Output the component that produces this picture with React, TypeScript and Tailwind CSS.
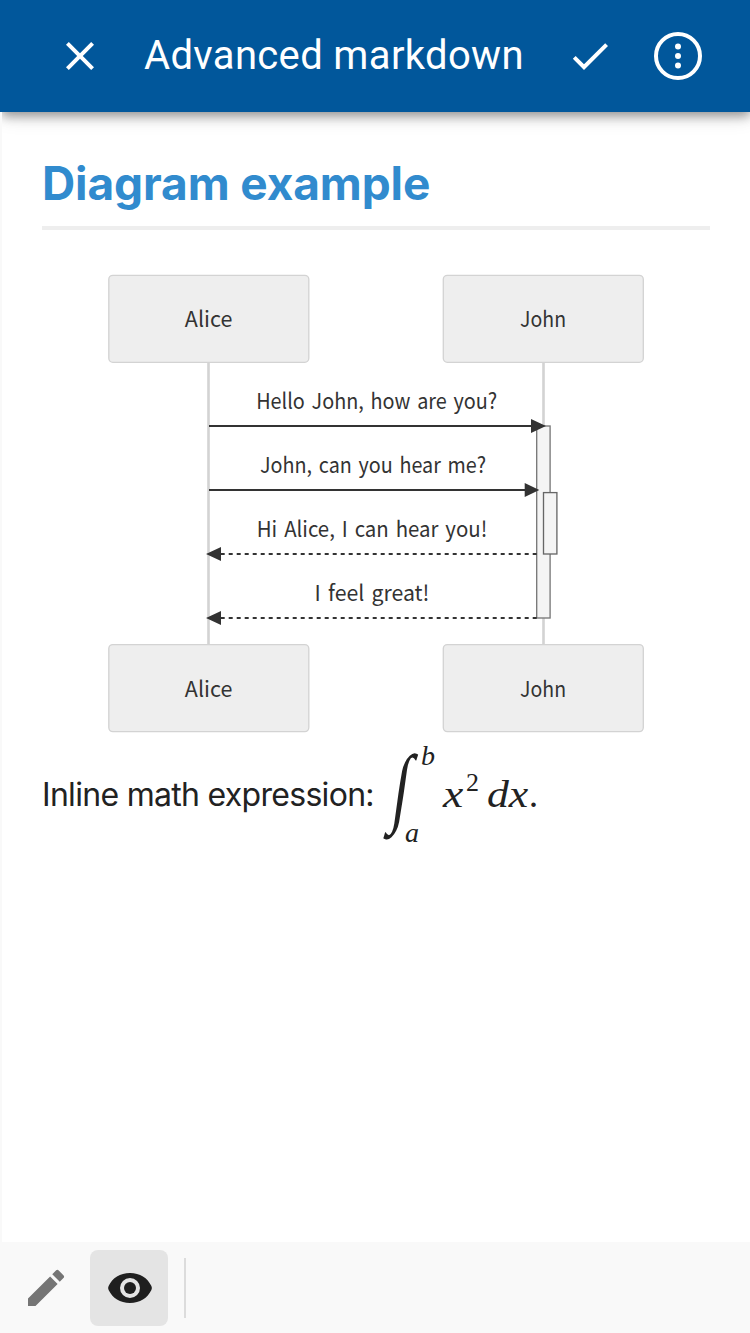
import { MdCheck, MdClose, MdEdit } from "react-icons/md";

const INK = "#333333";
const LINE = "#d3d3d3";

function Actor({ x, y, name, length }: { x: number; y: number; name: string; length: number }) {
  return (
    <g>
      <rect x={x} y={y} width="200" height="87" rx="4" fill="#eeeeee" stroke={LINE} strokeWidth="1.33" />
      <Label x={x + 99.8} y={y + 52} text={name} length={length} />
    </g>
  );
}

function Label({ x, y, text, length }: { x: number; y: number; text: string; length: number }) {
  return (
    <text
      x={x}
      y={y}
      textAnchor="middle"
      textLength={length}
      lengthAdjust="spacingAndGlyphs"
      fill={INK}
      className="font-['Noto_Sans_CJK_SC',sans-serif] text-[21.8px] [word-spacing:2.5px]"
    >
      {text}
    </text>
  );
}

function SequenceDiagram() {
  return (
    <svg viewBox="42 230 668 510" className="block h-[510px] w-[668px] shrink-0">
      <path d="M208.5 362V645M543.5 362V645" stroke={LINE} strokeWidth="2.6" />
      <Actor x={108.8} y={275.3} name="Alice" length={47.5} />
      <Actor x={443.3} y={275.3} name="John" length={46} />
      <Actor x={108.8} y={644.6} name="Alice" length={47.5} />
      <Actor x={443.3} y={644.6} name="John" length={46} />
      <rect x="536.7" y="426" width="13.4" height="192" fill="#f4f4f4" stroke="#777777" strokeWidth="1.33" />
      <rect x="543.5" y="492.6" width="13.4" height="61.4" fill="#f4f4f4" stroke="#666666" strokeWidth="1.33" />
      <g stroke={INK} strokeWidth="2">
        <path d="M209 426H535M209 490H529" />
        <path d="M536.7 554H218M536.7 618H218" strokeDasharray="4 4" />
      </g>
      <path
        d="M531 419L546 426L531 433ZM524.7 483L539.3 490L524.7 497ZM221 547L206 554L221 561ZM221 611L206 618L221 625Z"
        fill={INK}
      />
      <Label x={376.7} y={409.4} text="Hello John, how are you?" length={241} />
      <Label x={373} y={473.4} text="John, can you hear me?" length={226} />
      <Label x={372} y={537.4} text="Hi Alice, I can hear you!" length={230.5} />
      <Label x={372} y={601.4} text="I feel great!" length={115} />
    </svg>
  );
}

export default function App() {
  return (
    <div className="flex h-[1333px] w-[750px] flex-col bg-[#f9f9f9] font-[Inter,sans-serif] text-[#222222]">
      <header className="flex h-28 shrink-0 items-center bg-[#01579b] pr-12 pl-14 text-white">
        <MdClose className="size-12" />
        <h1 className="ml-10 w-[382px] font-[Roboto,sans-serif] text-[40px] leading-[56px] tracking-[0.35px] whitespace-nowrap">
          Advanced markdown
        </h1>
        <MdCheck className="ml-10 size-12" />
        <svg viewBox="0 0 48 48" className="ml-10 size-12" fill="currentColor">
          <circle cx="24" cy="24" r="22" fill="none" stroke="currentColor" strokeWidth="4" />
          <circle cx="24" cy="14.5" r="3" />
          <circle cx="24" cy="24" r="3" />
          <circle cx="24" cy="33.5" r="3" />
        </svg>
      </header>
      <main className="relative ml-0.5 flex flex-1 flex-col overflow-hidden bg-white pr-10 pl-10">
        <div className="absolute inset-x-0 -top-10 h-10 shadow-[0_4px_10px_rgba(0,0,0,0.36),0_5px_20px_rgba(0,0,0,0.12)]" />
        <h2 className="mt-10 h-[78px] shrink-0 border-b-4 border-[#eeeeee] text-[46px] leading-[62px] font-bold tracking-[-0.1px] whitespace-nowrap text-[#318bce]">
          Diagram example
        </h2>
        <SequenceDiagram />
        <p className="flex h-[110px] shrink-0 text-[32px] leading-[44px] whitespace-nowrap">
          <span className="mt-[33px] w-[335px] tracking-[-0.7px]">Inline math expression:</span>
          <span className="flex font-['Liberation_Serif',serif] italic">
            <span className="mt-[-3px] ml-3 w-8 origin-center scale-x-75 scale-y-110 -skew-x-12 text-[80px] leading-[100px]">
              ∫
            </span>
            <span className="-ml-1 flex w-[27px] flex-col justify-between pb-[3px] text-[28px] leading-7">
              <span className="mt-0.5 ml-1">b</span>
              <span className="-ml-3">a</span>
            </span>
            <span className="mt-8 -ml-px origin-left scale-x-120 text-[38px]">x</span>
            <span className="mt-[27px] ml-1.5 text-[26px] leading-8 not-italic">2</span>
            <span className="mt-8 ml-2 origin-left scale-x-115 text-[38px]">dx</span>
            <span className="mt-8 ml-1.5 text-[38px] not-italic">.</span>
          </span>
        </p>
      </main>
      <footer className="flex h-[91px] shrink-0 items-center bg-[#f9f9f9] pl-[22px]">
        <MdEdit className="size-12 text-[#757575]" />
        <div className="ml-5 flex h-[76px] w-[78px] items-center justify-center rounded-lg bg-[#e4e4e4] pl-0.5">
          <svg viewBox="0 0 48 48" className="size-12 text-[#1f1f1f]" fill="currentColor">
            <path
              fillRule="evenodd"
              d="M24 9C14 9 6.500 14 2.600 22Q1.600 24 2.600 26C6.500 34 14 39 24 39S41.500 34 45.400 26Q46.400 24 45.400 22C41.500 14 34 9 24 9ZM24 14A10 10 0 1 1 24 34A10 10 0 1 1 24 14Z"
            />
            <circle cx="24" cy="24" r="6" />
          </svg>
        </div>
        <div className="ml-4 h-[60px] w-0.5 bg-[#dcdcdc]" />
      </footer>
    </div>
  );
}
